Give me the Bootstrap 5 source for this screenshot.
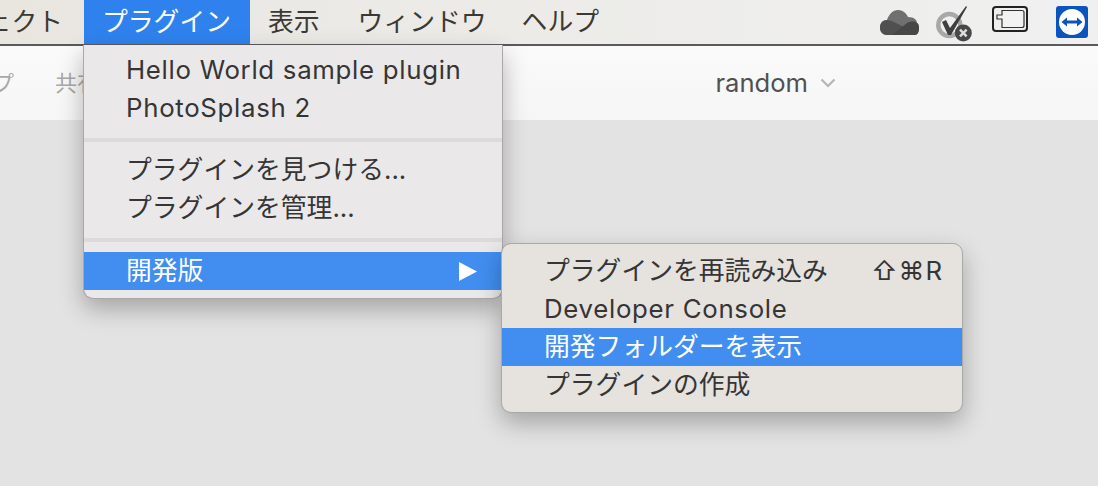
<!DOCTYPE html>
<html lang="ja">
<head>
  <meta charset="UTF-8" />
  <title>Menu</title>
  <link href="https://cdn.jsdelivr.net/npm/bootstrap@5.3.0/dist/css/bootstrap.min.css" rel="stylesheet" />
  <style>
    html, body { height: 100%; }
    body {
      background: #e3e3e3;
      overflow: hidden;
      color: #3a3a3a;
      font-family: Inter, "Noto Sans CJK JP", sans-serif;
      font-size: 25.8px;
    }
    .topbar {
      height: 46px;
      background: linear-gradient(90deg, #e9e6e0 0%, #ecebe8 45%, #f0f0f0 100%);
      border-bottom: 2px solid #5a5a5a;
    }
    .top-item { height: 44px; line-height: 44px; padding: 0 19px; color: #3b3935; white-space: nowrap; }
    .top-item.active-item { background: #2f82ee; color: #fff; padding: 0 19px 0 18px; margin-right: -1px; }
    .top-item.last-item { margin-left: -3px; }
    .top-cut { width: 84px; flex: none; overflow: hidden; justify-content: flex-end; }
    .top-cut .top-item { padding-right: 21px; }
    .tray { height: 44px; padding-right: 10px; }
    .tray-cloud { margin-right: 16px; }
    .tray-check { margin-right: 20px; }
    .tray-tablet { margin-right: 28px; margin-bottom: 6px; }
    .toolbar {
      height: 74px;
      background: linear-gradient(#fafafa, #f6f6f6);
      color: #a9a9a9;
      font-size: 22px;
    }
    .tool-cut { width: 14px; overflow: hidden; justify-content: flex-end; flex: none; }
    .tool-label { white-space: nowrap; }
    .tool-share { margin-left: 41px; }
    .branch { color: #505050; font-size: 25.6px; gap: 12px; margin-right: 262px; }
    .latin-text { letter-spacing: .7px; }
    .menu-main.dropdown-menu, .menu-sub.dropdown-menu {
      --bs-dropdown-bg: #eae8e9;
      --bs-dropdown-border-color: #a9a9a9;
      --bs-dropdown-min-width: 0;
      --bs-dropdown-font-size: 25.8px;
      --bs-dropdown-color: #353535;
      --bs-dropdown-link-color: #353535;
      --bs-dropdown-item-padding-x: 42px;
      --bs-dropdown-item-padding-y: 0;
      --bs-dropdown-link-hover-bg: transparent;
      --bs-dropdown-link-active-bg: #418ef0;
      --bs-dropdown-link-active-color: #fff;
      box-shadow: 0 10px 24px rgba(0, 0, 0, .28);
      margin: 0;
    }
    .menu-main.dropdown-menu {
      left: 83px; top: 45px; width: 420px;
      padding: 6px 0 8px;
      border-width: 0 1px 1px 1px;
      border-radius: 0 0 10px 10px;
    }
    .menu-sub.dropdown-menu {
      --bs-dropdown-bg: #e6e2de;
      left: 501px; top: 243px; width: 462px;
      padding: 8px 0;
      border-radius: 10px;
    }
    .menu-row { height: 38px; line-height: 38px; white-space: nowrap; }
    .menu-gap { height: 4px; background: #dcdadb; margin: 11px 0 9px; }
    .menu-gap.gap-low { margin: 11px 0 10px; }
    .shortcut { margin-right: -23px; letter-spacing: 1px; }
    .arrow-right { width: 18px; height: 19px; margin-right: -17px; fill: #fff; }
  </style>
</head>
<body>

  <!-- Menu bar -->
  <div class="topbar d-flex align-items-start">
    <div class="top-cut d-flex"><div class="top-item">プロジェクト</div></div>
    <div class="top-item active-item">プラグイン</div>
    <div class="top-item">表示</div>
    <div class="top-item">ウィンドウ</div>
    <div class="top-item last-item">ヘルプ</div>
    <div class="tray d-flex align-items-center ms-auto">
      <svg class="tray-cloud" width="40" height="25" viewBox="0 0 40 25">
        <path d="M7 25C2 25 0 21 0 17.500C0 13 3 10 7 10C9 4 13 0 18 0C23 0 26 3 28 7C34 7 37 10 37 13C40 14 40 25 35 25Z" fill="#707070"/>
        <path d="M7 25C2 25 0 21 0 17.500C0 13 3 10 7 10L12 11L26 18L33 25Z" fill="#505050"/>
        <path d="M12 25L27 13C31 11 35 11 37 13C40 14 40 25 35 25Z" fill="#474747"/>
      </svg>
      <svg class="tray-check" width="36" height="40" viewBox="0 0 36 40">
        <circle cx="13.300" cy="23" r="11" fill="none" stroke="#a8a8a8" stroke-width="4.500"/>
        <path d="M6 20L10 18L14 26L30 4L31 5L15 33H12Z" fill="#3f3f3f"/>
        <circle cx="27.300" cy="31" r="8.500" fill="#484848"/>
        <path d="M24 27.700L30.600 34.300M30.600 27.700L24 34.300" stroke="#ddd" stroke-width="2.500"/>
      </svg>
      <svg class="tray-tablet" width="36" height="26" viewBox="0 0 36 26">
        <rect x="1" y="1" width="34" height="24" rx="3" fill="none" stroke="#222" stroke-width="2"/>
        <path d="M10 4.500H30Q32 4.500 32 6.500V19.500Q32 21.500 30 21.500H10V13H5V9H10Z" fill="#f2f2f2" stroke="#333" stroke-width="1.200"/>
      </svg>
      <svg width="32" height="32" viewBox="0 0 32 32">
        <rect width="32" height="32" rx="3" fill="#0a55bd"/>
        <circle cx="16" cy="16" r="13" fill="#fff"/>
        <path d="M5.500 16L11 11.500V14.600H21V11.500L26.500 16L21 20.500V17.400H11V20.500Z" fill="#0a55bd"/>
      </svg>
    </div>
  </div>

  <!-- Toolbar -->
  <div class="toolbar d-flex align-items-center">
    <div class="tool-cut d-flex"><span class="tool-label">ヘルプ</span></div>
    <span class="tool-label tool-share">共有</span>
    <div class="branch d-flex align-items-center ms-auto">
      <span>random</span>
      <svg width="16" height="10" viewBox="0 0 16 10"><path d="M1.500 1.500L8 8L14.500 1.500" fill="none" stroke="#b5b5b5" stroke-width="2.200"/></svg>
    </div>
  </div>

  <!-- Plugin menu -->
  <div class="dropdown-menu show menu-main">
    <a class="dropdown-item menu-row latin-text" href="#">Hello World sample plugin</a>
    <a class="dropdown-item menu-row latin-text" href="#">PhotoSplash 2</a>
    <div class="menu-gap"></div>
    <a class="dropdown-item menu-row" href="#">プラグインを見つける...</a>
    <a class="dropdown-item menu-row" href="#">プラグインを管理...</a>
    <div class="menu-gap gap-low"></div>
    <a class="dropdown-item menu-row active d-flex justify-content-between align-items-center" href="#">
      <span>開発版</span>
      <svg class="arrow-right" viewBox="0 0 18 19"><path d="M0 0L18 9.500L0 19Z"/></svg>
    </a>
  </div>

  <!-- Developer submenu -->
  <div class="dropdown-menu show menu-sub">
    <a class="dropdown-item menu-row d-flex justify-content-between" href="#">
      <span>プラグインを再読み込み</span><span class="shortcut">⇧⌘R</span>
    </a>
    <a class="dropdown-item menu-row latin-text" href="#">Developer Console</a>
    <a class="dropdown-item menu-row active" href="#">開発フォルダーを表示</a>
    <a class="dropdown-item menu-row" href="#">プラグインの作成</a>
  </div>

  <script src="https://cdn.jsdelivr.net/npm/bootstrap@5.3.0/dist/js/bootstrap.bundle.min.js"></script>
</body>
</html>
